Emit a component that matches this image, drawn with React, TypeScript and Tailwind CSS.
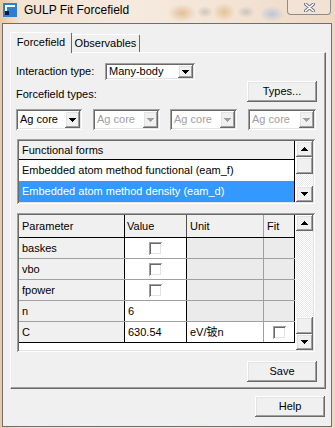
import React from 'react';

const raised =
  'bg-[#f0f0f0] shadow-[inset_-1px_-1px_0_#696969,inset_1px_1px_0_#ffffff,inset_-2px_-2px_0_#a0a0a0,inset_2px_2px_0_#e3e3e3]';
const sunken =
  'shadow-[inset_1px_1px_0_#a0a0a0,inset_-1px_-1px_0_#ffffff,inset_2px_2px_0_#696969,inset_-2px_-2px_0_#e3e3e3]';
const track = 'bg-[repeating-conic-gradient(#ffffff_0_25%,#e9e9e9_0_50%)] bg-[length:2px_2px]';

const Arrow: React.FC<{ up?: boolean; color?: string }> = ({ up = false, color = '#000' }) => (
  <svg width="7" height="4" viewBox="0 0 7 4" shapeRendering="crispEdges">
    <path
      d={up ? 'M3 0h1v1h1v1h1v1h1v1H0V3h1V2h1V1h1z' : 'M0 0h7v1H6v1H5v1H4v1H3V3H2V2H1V1H0z'}
      fill={color}
    />
  </svg>
);

const Combo: React.FC<{ text: string; size: string; disabled?: boolean }> = ({ text, size, disabled }) => (
  <div className={`${size} ${sunken} bg-white flex p-[2px]`}>
    <span className={`flex-1 pl-[2px] flex items-center ${disabled ? 'text-[#a0a0a0]' : 'text-black'}`}>{text}</span>
    <div className={`w-[15px] ${raised} flex items-center justify-center`}>
      <Arrow color={disabled ? '#a0a0a0' : '#000'} />
    </div>
  </div>
);

const Button: React.FC<{ label: string; className?: string }> = ({ label, className = '' }) => (
  <div className={`w-[70px] h-[21px] ${raised} flex items-center justify-center text-black ${className}`}>{label}</div>
);

const Check = () => <div className={`w-[13px] h-[13px] bg-white ${sunken}`} />;

const ScrollBar: React.FC<{ thumbTop?: boolean }> = ({ thumbTop }) => (
  <div className="w-[17px] flex flex-col">
    <div className={`h-[16px] ${raised} flex items-center justify-center`}>
      <Arrow up />
    </div>
    {thumbTop && <div className={`h-[17px] ${raised}`} />}
    <div className={`flex-1 ${track}`} />
    {!thumbTop && <div className={`h-[17px] ${raised}`} />}
    <div className={`h-[16px] ${raised} flex items-center justify-center`}>
      <Arrow />
    </div>
  </div>
);

const rows = [
  { name: 'baskes', value: null, unit: '', fit: false, edit: false },
  { name: 'vbo', value: null, unit: '', fit: false, edit: false },
  { name: 'fpower', value: null, unit: '', fit: false, edit: false },
  { name: 'n', value: '6', unit: '', fit: false, edit: false },
  { name: 'C', value: '630.54', unit: 'eV/铍n', fit: true, edit: true },
];

export default function App() {
  return (
    <div className="w-[335px] h-[428px] pl-[2px] pr-[3px] pb-[1px] flex flex-col font-['Liberation_Sans',Arial,'Noto_Sans_CJK_SC',sans-serif] text-[11px] bg-[radial-gradient(ellipse_14px_9px_at_182px_13px,#e2bf98,transparent),radial-gradient(ellipse_8px_6px_at_205px_12px,#cfc5bb,transparent),radial-gradient(ellipse_11px_9px_at_224px_12px,#e6c296,transparent),radial-gradient(ellipse_9px_6px_at_246px_12px,#cdc4bc,transparent),radial-gradient(ellipse_12px_8px_at_272px_14px,#bcc6d8,transparent),linear-gradient(90deg,#e8c8a8_0%,#f3e3d3_6%,#f6eadf_40%,#f2e2d2_75%,#eed8c4_100%)]">
      {/* title bar */}
      <div className="h-[23px] flex items-start">
        <svg className="mt-[3px] ml-[1px]" width="14" height="14" viewBox="0 0 14 14" shapeRendering="crispEdges">
          <rect x="0" y="0" width="14" height="14" fill="#2d7fd2" />
          <rect x="2" y="2" width="10" height="10" fill="#ffffff" />
          <rect x="4" y="4" width="8" height="8" fill="#2d7fd2" />
          <rect x="2" y="8" width="4" height="4" fill="#0b1a3a" />
        </svg>
        <span className="ml-[7px] mt-[3px] text-[12px] leading-[15px] text-black">GULP Fit Forcefield</span>
        <div className="ml-auto mr-px w-[44px] h-[15px] border border-t-0 border-[#8c8c8c] rounded-b-[4px] bg-[#f3e7dd]/60 flex items-center justify-center">
          <svg width="11" height="9" viewBox="0 0 11 9">
            <path d="M1.5 1 L9.5 8 M9.5 1 L1.5 8" stroke="#6a6a78" strokeWidth="3.2" strokeLinecap="round" />
            <path d="M1.5 1 L9.5 8 M9.5 1 L1.5 8" stroke="#ffffff" strokeWidth="1.6" strokeLinecap="round" />
          </svg>
        </div>
      </div>

      {/* client */}
      <div className="flex-1 border border-[#6e6e6e] bg-[#f0f0f0] pl-[7px] pt-[8px] flex flex-col">
        {/* tabs */}
        <div className="h-[20px] flex items-end">
          <div className="relative z-10 -mb-px w-[62px] h-[21px] border-t border-l border-white border-r border-r-[#696969] rounded-t-[2px] bg-[#f0f0f0] flex items-center justify-center pb-px">
            Forcefield
          </div>
          <div className="w-[68px] h-[18px] border-t border-white border-r border-r-[#696969] rounded-t-[2px] bg-[#f0f0f0] flex items-center justify-center">
            Observables
          </div>
        </div>

        {/* panel */}
        <div className="w-[316px] h-[337px] border border-t-white border-l-white border-r-[#696969] border-b-[#696969] shadow-[inset_-1px_-1px_0_#a0a0a0] flex flex-col">
          <div className="mt-[10px] h-[17px] flex items-center">
            <span className="pl-[5px] w-[94px]">Interaction type:</span>
            <Combo text="Many-body" size="w-[90px] h-[17px]" />
          </div>

          <div className="mt-px h-[21px] flex items-end">
            <span className="pl-[5px] leading-[13px] mb-px">Forcefield types:</span>
            <Button label="Types..." className="ml-auto mr-[8px]" />
          </div>

          <div className="mt-[7px] h-[21px] flex pl-[5px]">
            <Combo text="Ag core" size="w-[66px] h-[21px]" />
            <Combo text="Ag core" size="ml-[11px] w-[67px] h-[21px]" disabled />
            <Combo text="Ag core" size="ml-[10px] w-[67px] h-[21px]" disabled />
            <Combo text="Ag core" size="ml-[11px] w-[68px] h-[21px]" disabled />
          </div>

          {/* functional forms list */}
          <div className={`mt-[9px] ml-[6px] w-[298px] h-[65px] ${sunken} p-[2px] flex`}>
            <div className="w-[276px] border-r border-black flex flex-col">
              <div className="h-[19px] border-b border-black bg-[#f0f0f0] pl-[3px] flex items-center">Functional forms</div>
              <div className="h-[21px] bg-white pl-[3px] flex items-center">Embedded atom method functional (eam_f)</div>
              <div className="flex-1 bg-[#3399ff] text-white pl-[3px] flex items-center">
                Embedded atom method density (eam_d)
              </div>
            </div>
            <div className="w-px bg-white" />
            <ScrollBar thumbTop />
          </div>

          {/* parameter table */}
          <div className={`mt-[9px] ml-[6px] w-[298px] h-[139px] ${sunken} p-[2px] flex bg-white`}>
            <div className="w-[276px] flex flex-col">
              <div className="grid grid-cols-[106px_62px_77px_31px] h-[23px] bg-[#f0f0f0] border-b border-black">
                <div className="border-r border-black pl-[3px] flex items-center">Parameter</div>
                <div className="border-r border-[#505050] pl-[2px] flex items-center">Value</div>
                <div className="border-r border-[#a0a0a0] pl-[3px] flex items-center">Unit</div>
                <div className="border-r border-black pl-[3px] flex items-center">Fit</div>
              </div>
              {rows.map((r, i) => (
                <div
                  key={r.name}
                  className={`grid grid-cols-[106px_62px_77px_31px] h-[21px] border-b ${
                    i === rows.length - 1 ? 'border-black' : 'border-[#a0a0a0]'
                  }`}
                >
                  <div className="bg-[#f0f0f0] border-r border-black pl-[3px] flex items-center">{r.name}</div>
                  <div className="bg-white border-r border-black pl-[3px] flex items-center">
                    {r.value === null ? (
                      <div className="flex-1 flex justify-center pr-[3px]">
                        <Check />
                      </div>
                    ) : (
                      r.value
                    )}
                  </div>
                  <div
                    className={`${r.edit ? 'bg-white' : 'bg-[#ebebeb]'} border-r border-[#a0a0a0] pl-[3px] flex items-center`}
                  >
                    {r.unit}
                  </div>
                  <div className={`${r.edit ? 'bg-white' : 'bg-[#ebebeb]'} border-r border-black flex items-center justify-center`}>
                    {r.fit && <Check />}
                  </div>
                </div>
              ))}
            </div>
            <div className="w-px bg-white" />
            <ScrollBar />
          </div>

          <Button label="Save" className="mt-[9px] self-end mr-[8px]" />
        </div>

        <div className="mt-[7px] flex justify-end pr-[6px]">
          <Button label="Help" />
        </div>
      </div>
    </div>
  );
}
